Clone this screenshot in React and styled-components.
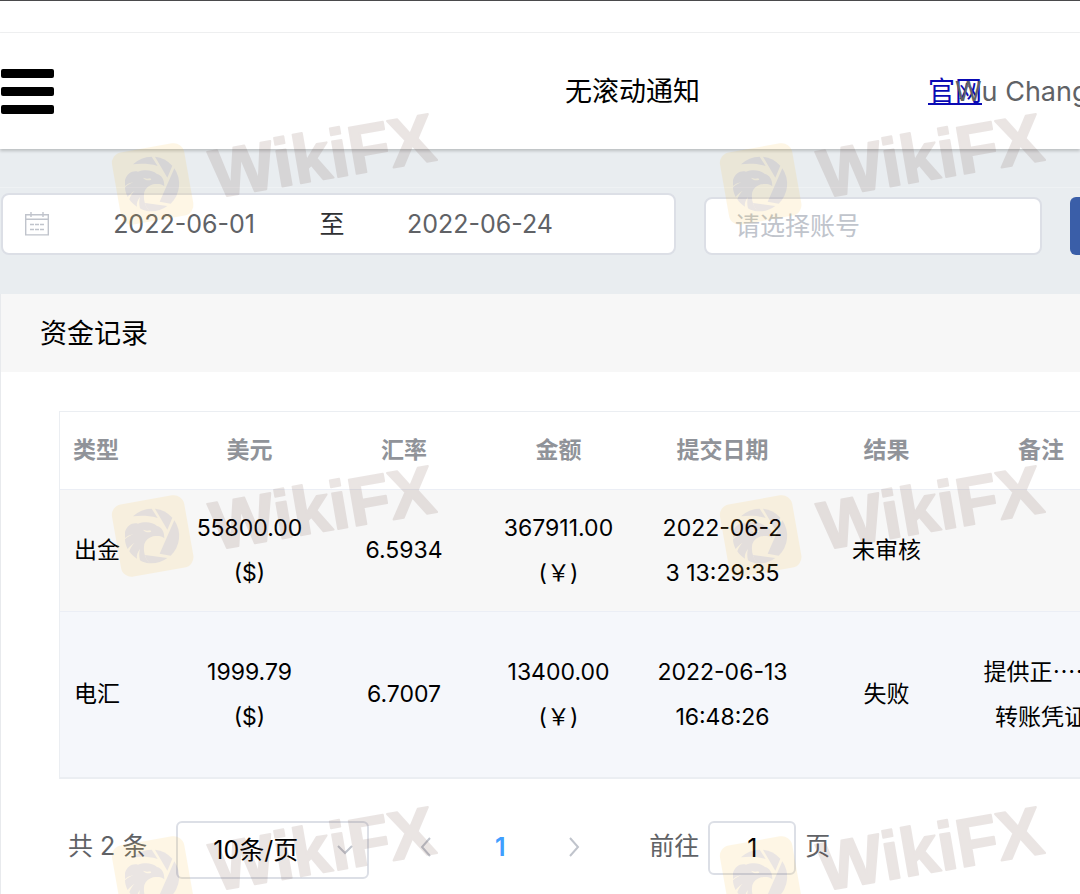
import React from "react";
import styled, { createGlobalStyle } from "styled-components";

const rows = [
  {
    type: "出金",
    usd: "55800.00\n($)",
    rate: "6.5934",
    amount: "367911.00\n(￥)",
    date: "2022-06-2\n3 13:29:35",
    result: "未审核",
    remark: "",
    height: 122,
  },
  {
    type: "电汇",
    usd: "1999.79\n($)",
    rate: "6.7007",
    amount: "13400.00\n(￥)",
    date: "2022-06-13\n16:48:26",
    result: "失败",
    remark: "提供正⋯⋯\n转账凭证",
    height: 165,
  },
];

const columns = [
  { key: "type", label: "类型", width: 112 },
  { key: "usd", label: "美元", width: 155 },
  { key: "rate", label: "汇率", width: 154 },
  { key: "amount", label: "金额", width: 155 },
  { key: "date", label: "提交日期", width: 173 },
  { key: "result", label: "结果", width: 155 },
  { key: "remark", label: "备注", width: 154 },
];

const marks = [
  [100, 100],
  [708, 100],
  [100, 452],
  [708, 452],
  [100, 793],
  [708, 793],
];

const CalendarIcon = () => (
  <svg width="24" height="24" viewBox="0 0 24 24" fill="none" stroke="#c0c4cc" aria-hidden="true">
    <path d="M.7 2.7h22.6v20.2H.7zM.7 7.3h22.6" strokeWidth="1.4" />
    <path d="M6 0v5M18 0v5" strokeWidth="1.4" />
    <path d="M5 12.5h4M10 12.5h4M15 12.5h4M5 17.5h4M10 17.5h4M15 17.5h4" strokeWidth="1.4" />
  </svg>
);

const Chevron = ({ d, w, h }) => (
  <svg width={w} height={h} viewBox={`0 0 ${w} ${h}`} fill="none" stroke="#c0c4cc" strokeWidth="2" aria-hidden="true">
    <path d={d} />
  </svg>
);

const Mark = ({ x, y }) => (
  <g transform={`translate(${x} ${y})`} opacity="0.12">
    <g transform="translate(7 38) scale(0.3333)">
      <rect x="27" y="28" width="220" height="220" rx="32" fill="#f7bc2f" transform="rotate(-10 137 138)" />
      <g fill="#582f26">
        <path d="M78 79A82 82 0 0 1 134 56L152 84C124 76 98 77 78 79Z" />
        <path d="M144 56A82 82 0 0 1 196 83L181 119Z" />
        <path d="M202 91A82 82 0 0 1 191 197L158 191Z" />
        <path d="M114 195L181 204A82 82 0 0 1 128 220C120 212 116 204 114 195Z" />
        <path
          fillRule="evenodd"
          d="M54 126C60 106 76 97 93 101C112 94 136 95 150 108C164 112 172 123 172 145C164 137 151 137 138 139C126 143 116 150 112 162C108 182 113 204 128 220C116 219 107 216 99 211C96 198 96 188 99 177C91 187 88 197 90 206C80 200 73 193 67 184C70 174 76 165 83 158C73 164 66 171 62 177C57 168 54 157 54 148C62 141 71 136 80 133C69 134 60 139 54 144ZM108 119C115 127 123 129 133 125L130 121L120 122Z"
        />
      </g>
    </g>
    <text
      x="115"
      y="98"
      transform="rotate(-9.75 115 98)"
      fontFamily="Liberation Sans, sans-serif"
      fontWeight="700"
      fontSize="68"
      fill="#582f26"
      stroke="#582f26"
      strokeWidth="2"
      strokeLinejoin="round"
    >
      WikiFX
    </text>
  </g>
);

const App = () => {
  return (
    <Page>
      <GlobalStyle />
      <TopStrip />
      <Header>
        <MenuButton aria-label="菜单">
          <Bar />
          <Bar />
          <Bar />
        </MenuButton>
        <Notice>无滚动通知</Notice>
        <UserArea>
          <SiteLink href="#">官网</SiteLink>
          <UserName>Wu Chang</UserName>
        </UserArea>
      </Header>

      <Filters>
        <DateRange>
          <CalendarIcon />
          <StartInput aria-label="开始日期" defaultValue="2022-06-01" />
          <Separator>至</Separator>
          <DateInput aria-label="结束日期" defaultValue="2022-06-24" />
        </DateRange>
        <AccountSelect aria-label="账号" defaultValue="">
          <option value="">请选择账号</option>
        </AccountSelect>
        <SearchButton aria-label="查询" />
      </Filters>

      <Panel>
        <PanelTitle>资金记录</PanelTitle>
        <PanelBody>
          <Table>
            <colgroup>
              {columns.map((col) => (
                <Col key={col.key} $width={col.width} />
              ))}
            </colgroup>
            <thead>
              <tr>
                {columns.map((col) => (
                  <Th key={col.key} scope="col">
                    {col.label}
                  </Th>
                ))}
              </tr>
            </thead>
            <tbody>
              {rows.map((row, id) => (
                <Row key={id} $height={row.height} $active={id === 1}>
                  {columns.map((col) => (
                    <Td key={col.key}>{row[col.key]}</Td>
                  ))}
                </Row>
              ))}
            </tbody>
          </Table>

          <Pagination>
            <span>共 2 条</span>
            <SizeBox>
              <SizeSelect aria-label="每页条数">
                <option>10条/页</option>
              </SizeSelect>
              <SizeArrow>
                <Chevron w={16} h={10} d="M1 1l7 7 7-7" />
              </SizeArrow>
            </SizeBox>
            <Pager>
              <PageButton aria-label="上一页">
                <Chevron w={12} h={20} d="M10 1L2 10l8 9" />
              </PageButton>
              <PageButton>1</PageButton>
              <PageButton aria-label="下一页">
                <Chevron w={12} h={20} d="M2 1l8 9-8 9" />
              </PageButton>
            </Pager>
            <Jump>
              前往
              <JumpInput defaultValue="1" />页
            </Jump>
          </Pagination>
        </PanelBody>
      </Panel>

      <Watermark>
        <svg width="1080" height="960" aria-hidden="true">
          {marks.map(([x, y]) => (
            <Mark key={`${x}-${y}`} x={x} y={y} />
          ))}
        </svg>
      </Watermark>
    </Page>
  );
};

const GlobalStyle = createGlobalStyle`
  * {
    box-sizing: border-box;
  }
  body {
    margin: 0;
    background: #e9edf0;
  }
  body, button, input, select {
    font-family: Inter, "Noto Sans CJK SC", sans-serif;
  }
`;

const Page = styled.div`
  position: relative;
  min-height: 100vh;
  overflow: hidden;
  display: flex;
  flex-direction: column;
  color: #000;
`;

const TopStrip = styled.div`
  height: 33px;
  background: #fff;
  border-top: 1px solid #4a4a4c;
  border-bottom: 1px solid #f0f1f2;
`;

const Header = styled.header`
  display: flex;
  align-items: center;
  height: 116px;
  background: #fff;
  box-shadow: 0 2px 3px rgba(0, 0, 0, 0.2);
  font-size: 27px;
  white-space: nowrap;
`;

const MenuButton = styled.button`
  display: flex;
  flex-direction: column;
  gap: 9px;
  width: 54px;
  padding: 0 0 0 1px;
  border: 0;
  background: none;
`;

const Bar = styled.span`
  height: 9px;
  border-radius: 2px;
  background: #000;
`;

const Notice = styled.div`
  margin-left: auto;
  margin-right: 228px;
  padding-bottom: 4px;
`;

const UserArea = styled.div`
  display: flex;
  align-items: baseline;
  width: 152px;
  padding-bottom: 4px;
`;

const SiteLink = styled.a`
  color: #0a0ab4;
`;

const UserName = styled.span`
  margin-left: -27px;
  color: #606266;
`;

const Filters = styled.div`
  display: flex;
  align-items: flex-end;
  margin-top: 38px;
  padding: 5px 0 39px 1px;
  border-top: 1px solid #eff2f4;
`;

const DateRange = styled.div`
  display: flex;
  align-items: center;
  flex: none;
  width: 675px;
  height: 62px;
  padding-left: 22px;
  border: 2px solid #dcdfe6;
  border-radius: 8px;
  background: #fff;
`;

const DateInput = styled.input`
  width: 222px;
  padding: 0;
  border: 0;
  background: none;
  font-size: 25px;
  text-align: center;
  color: #606266;
`;

const StartInput = styled(DateInput)`
  margin-left: 24px;
`;

const Separator = styled.span`
  width: 74px;
  padding-bottom: 4px;
  font-size: 25px;
  text-align: center;
  color: #303133;
`;

const AccountSelect = styled.select`
  appearance: none;
  flex: none;
  width: 338px;
  height: 58px;
  margin-left: 28px;
  padding: 0 29px;
  border: 2px solid #dcdfe6;
  border-radius: 8px;
  background: #fff;
  font-size: 25px;
  color: #c0c4cc;
`;

const SearchButton = styled.button`
  flex: none;
  width: 120px;
  height: 58px;
  margin-left: 28px;
  border: 0;
  border-radius: 6px;
  background: #3a5ea8;
`;

const Panel = styled.section`
  flex: 1;
  border-left: 1px solid #e8eaed;
  background: #fff;
`;

const PanelTitle = styled.h2`
  height: 78px;
  margin: 0;
  padding-left: 39px;
  background: #f7f7f7;
  font-size: 27px;
  font-weight: 400;
  line-height: 80px;
`;

const PanelBody = styled.div`
  padding: 39px 0 15px 58px;
`;

const Table = styled.table`
  width: 1060px;
  table-layout: fixed;
  border-collapse: separate;
  border-spacing: 0;
  border: 1px solid #ebeef2;
  border-bottom-width: 2px;
`;

const Col = styled.col`
  width: ${(props) => props.$width}px;
`;

const Th = styled.th`
  height: 78px;
  padding: 0 0 5px;
  border-bottom: 1px solid #ebeef5;
  font-size: 23px;
  font-weight: 700;
  color: #909399;

  &:first-child {
    padding-left: 13px;
    text-align: left;
  }
`;

const Row = styled.tr`
  height: ${(props) => props.$height}px;
  background: ${(props) => (props.$active ? "#f5f7fb" : "#f7f7f7")};
`;

const Td = styled.td`
  padding: 0;
  border-bottom: 1px solid #ebeef5;
  font-size: 23px;
  line-height: 45px;
  text-align: center;
  white-space: pre;

  &:first-child {
    padding-left: 14px;
    text-align: left;
  }

  ${Row}:last-child & {
    border-bottom: 0;
  }
`;

const Pagination = styled.div`
  display: flex;
  align-items: flex-start;
  margin-top: 42px;
  padding-left: 9px;
  font-size: 25px;
  line-height: 50px;
  white-space: nowrap;
  color: #606266;
`;

const SizeBox = styled.div`
  position: relative;
  display: flex;
  margin-left: 29px;
`;

const SizeSelect = styled.select`
  appearance: none;
  width: 193px;
  height: 58px;
  padding: 0 35px;
  border: 2px solid #dcdfe6;
  border-radius: 6px;
  background: #fff;
  font-size: 25px;
  color: #000;
`;

const SizeArrow = styled.span`
  position: absolute;
  top: 50%;
  right: 16px;
  display: flex;
  transform: translateY(-50%);
  pointer-events: none;
`;

const Pager = styled.div`
  display: flex;
  margin-left: 20px;
`;

const PageButton = styled.button`
  display: flex;
  align-items: center;
  justify-content: center;
  width: 74px;
  height: 52px;
  padding: 0;
  border: 0;
  background: none;
  font-size: 25px;
  font-weight: 600;
  color: #409eff;
`;

const Jump = styled.label`
  display: flex;
  align-items: flex-start;
  margin-left: 38px;
`;

const JumpInput = styled.input`
  width: 88px;
  height: 54px;
  margin: 0 9px;
  padding: 0;
  border: 2px solid #dcdfe6;
  border-radius: 6px;
  background: #fff;
  font-size: 25px;
  text-align: center;
  color: #000;
`;

const Watermark = styled.div`
  position: absolute;
  inset: 0;
  overflow: hidden;
  pointer-events: none;
`;

export default App;
